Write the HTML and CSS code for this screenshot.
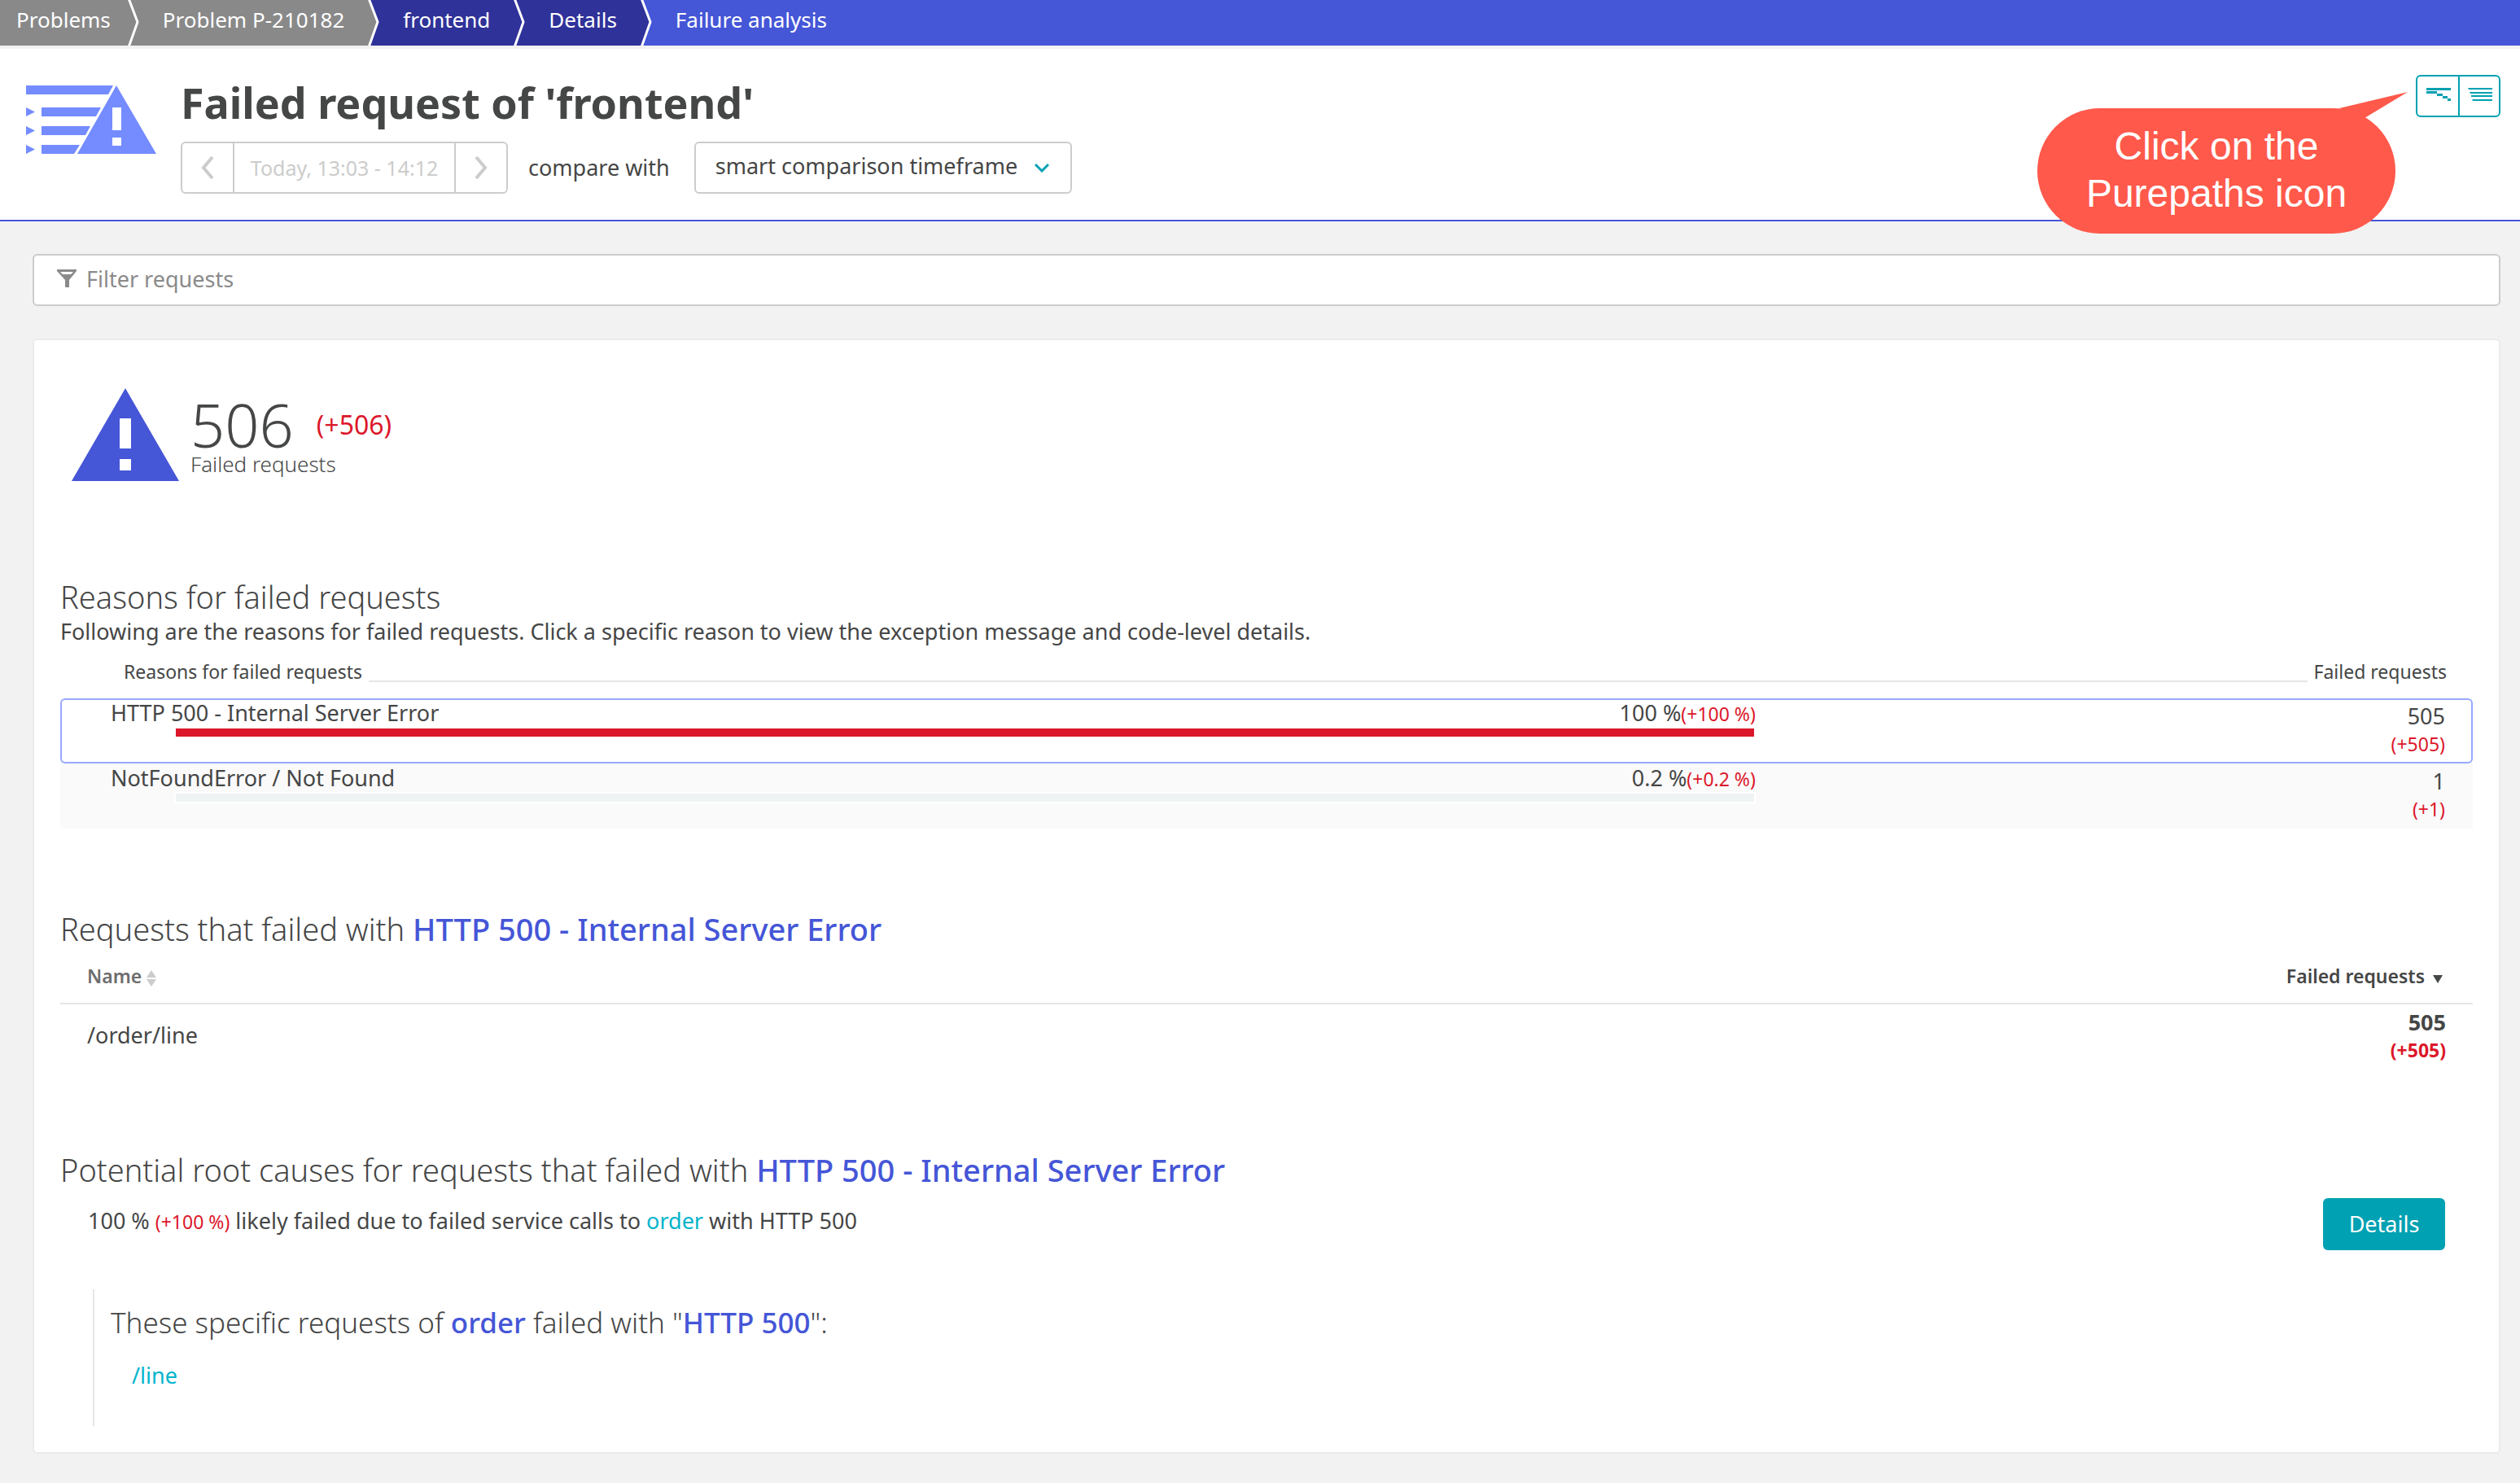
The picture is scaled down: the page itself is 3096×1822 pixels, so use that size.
FILE: index.html
```html
<!DOCTYPE html>
<html lang="en">
<head>
<meta charset="utf-8">
<title>Failure analysis</title>
<link rel="stylesheet" href="styles.css">
</head>
<body>
<nav class="crumbs" aria-label="Breadcrumb">
  <a class="crumb crumb-first crumb-gray" href="#">Problems</a>
  <svg class="sep sep-gray crumb-gray" viewBox="0 0 16 56" aria-hidden="true"><path d="M0 -2H2L13 27L2 58H0Z"/><polyline points="2,-2 13,27 2,58"/></svg>
  <a class="crumb crumb-gray" href="#">Problem P-210182</a>
  <svg class="sep sep-gray crumb-navy" viewBox="0 0 16 56" aria-hidden="true"><path d="M0 -2H2L13 27L2 58H0Z"/><polyline points="2,-2 13,27 2,58"/></svg>
  <a class="crumb crumb-navy" href="#">frontend</a>
  <svg class="sep sep-navy crumb-navy" viewBox="0 0 16 56" aria-hidden="true"><path d="M0 -2H2L13 27L2 58H0Z"/><polyline points="2,-2 13,27 2,58"/></svg>
  <a class="crumb crumb-navy" href="#">Details</a>
  <svg class="sep sep-navy crumb-blue" viewBox="0 0 16 56" aria-hidden="true"><path d="M0 -2H2L13 27L2 58H0Z"/><polyline points="2,-2 13,27 2,58"/></svg>
  <a class="crumb crumb-blue crumb-last" href="#" aria-current="page">Failure analysis</a>
</nav>

<header class="page-head">
  <svg class="head-icon" width="160" height="84" viewBox="0 0 160 84" aria-hidden="true">
    <path d="M0 0H107L101 11H0ZM19 27H92L86 38H19ZM19 50H79L73 61H19ZM19 73H66L59 84H19Z"/>
    <path d="M0 27L11 32.500L0 38ZM0 50L11 55.500L0 61ZM0 73L11 78.500L0 84Z"/>
    <path fill-rule="evenodd" d="M111 0L160 84H63ZM106 27H117V55H106ZM106 64H117V74H106Z"/>
  </svg>
  <div class="head-main">
    <h1>Failed request of 'frontend'</h1>
    <div class="controls">
      <div class="timeframe">
        <button type="button" aria-label="Previous timeframe" disabled><svg width="16" height="28" viewBox="0 0 16 28"><polyline points="14,1 3,14 14,27"/></svg></button>
        <button type="button" class="range" disabled>Today, 13:03 - 14:12</button>
        <button type="button" aria-label="Next timeframe" disabled><svg width="16" height="28" viewBox="0 0 16 28"><polyline points="2,1 13,14 2,27"/></svg></button>
      </div>
      <label for="compare">compare with</label>
      <div class="select">
        <select id="compare"><option>smart comparison timeframe</option></select>
        <svg width="18" height="12" viewBox="0 0 18 12" aria-hidden="true"><polyline points="1,2 9,10 17,2"/></svg>
      </div>
    </div>
  </div>
  <div class="views">
    <button type="button" aria-label="Purepaths"><svg width="30" height="16" viewBox="0 0 30 16"><path d="M0 0H30V3H0ZM0 4H13V7H0ZM13 7H20V10H13ZM20 10H26V13H20ZM26 13H30V16H26Z"/></svg></button>
    <button type="button" aria-label="Response time analysis"><svg width="30" height="16" viewBox="0 0 30 16"><path d="M0 0H30V2H1ZM2 5H30V7H3ZM4 9H30V11H4ZM5 14H30V16H6Z"/></svg></button>
  </div>
  <div class="callout">
    <svg width="84" height="32" viewBox="0 0 84 32" aria-hidden="true"><path d="M0 20L84 0L31 32Z"/></svg>
    Click on the<br>Purepaths icon
  </div>
</header>

<main>
  <div class="filter">
    <svg width="24" height="22" viewBox="0 0 24 22" aria-hidden="true"><path fill-rule="evenodd" d="M0 0H24V2L15 13V22H10V13L0 2ZM4 3L7 6H17L20 3Z"/></svg>
    <input type="text" placeholder="Filter requests" aria-label="Filter requests">
  </div>

  <div class="card">
    <div class="summary">
      <svg width="132" height="114" viewBox="0 0 132 114" aria-hidden="true"><path fill-rule="evenodd" d="M66 0L132 114H0ZM59 37H73V74H59ZM59 87H73V101H59Z"/></svg>
      <div class="summary-text">
        <div class="figure"><span class="count">506</span><span class="count-delta">(+506)</span></div>
        <div class="light">Failed requests</div>
      </div>
    </div>

    <section class="reasons">
      <h2>Reasons for failed requests</h2>
      <p>Following are the reasons for failed requests. Click a specific reason to view the exception message and code-level details.</p>
      <table class="reason-table">
        <thead>
          <tr><th scope="col"><div class="rule-head">Reasons for failed requests</div></th><th scope="col">Failed requests</th></tr>
        </thead>
        <tbody>
          <tr class="selected">
            <td><div class="share"><div class="share-line"><span>HTTP 500 - Internal Server Error</span><span>100 %<span class="delta">(+100 %)</span></span></div><div class="bar"><div class="bar-fill" style="width:100%"></div></div></div></td>
            <td class="num">505<div class="delta">(+505)</div></td>
          </tr>
          <tr>
            <td><div class="share"><div class="share-line"><span>NotFoundError / Not Found</span><span>0.2 %<span class="delta">(+0.2 %)</span></span></div><div class="bar"></div></div></td>
            <td class="num">1<div class="delta">(+1)</div></td>
          </tr>
        </tbody>
      </table>
    </section>

    <section>
      <h2>Requests that failed with <strong>HTTP 500 - Internal Server Error</strong></h2>
      <table class="request-table">
        <thead>
          <tr>
            <th scope="col" class="muted">Name <svg class="sort" width="12" height="20" viewBox="0 0 12 20" aria-hidden="true"><path d="M6 0L12 9H0ZM0 11H12L6 20Z"/></svg></th>
            <th scope="col">Failed requests <svg class="sorted" width="12" height="10" viewBox="0 0 12 10" aria-hidden="true"><path d="M0 0H12L6 10Z"/></svg></th>
          </tr>
        </thead>
        <tbody>
          <tr><td>/order/line</td><td class="num">505<div class="delta">(+505)</div></td></tr>
        </tbody>
      </table>
    </section>

    <section>
      <h2>Potential root causes for requests that failed with <strong>HTTP 500 - Internal Server Error</strong></h2>
      <div class="cause">
        <p>100 % <span class="delta">(+100 %)</span> likely failed due to failed service calls to <a href="#">order</a> with HTTP 500</p>
        <button type="button" class="primary">Details</button>
      </div>
      <div class="specifics">
        <h3>These specific requests of <strong>order</strong> failed with "<strong>HTTP 500</strong>":</h3>
        <a href="#">/line</a>
      </div>
    </section>
  </div>
</main>
</body>
</html>
```
FILE: styles.css
```css
:root {
  --text: #454646;
  --blue: #4556d7;
  --navy: #2f3299;
  --gray: #898989;
  --teal: #00a1b2;
  --link: #00b4cc;
  --red: #dc172a;
  --line: #e6e6e6;
  --edge: #cccccc;
}

* { box-sizing: border-box; }

body {
  margin: 0;
  background: #f2f2f2;
  color: var(--text);
  font: 400 27px/32px "Noto Sans", sans-serif;
}

button, select, input { font: inherit; color: inherit; }
h1, h2, h3, p { margin: 0; }
a { color: var(--link); text-decoration: none; }
svg { display: block; flex: none; }

/* Breadcrumb */
.crumbs {
  display: flex;
  height: 56px;
  margin-bottom: 4px;
  background: var(--blue);
  font-size: 26px;
}
.crumb {
  padding: 8px 28px 0;
  color: #fff;
  white-space: nowrap;
}
.crumb-first { padding: 8px 20px 0; }
.crumb-last { flex: 1; }
.crumb-gray { background: var(--gray); }
.crumb-navy { background: var(--navy); }
.crumb-blue { background: var(--blue); }
.sep { width: 16px; height: 56px; }
.sep polyline { fill: none; stroke: #fff; stroke-width: 3; }
.sep-gray path { fill: var(--gray); }
.sep-navy path { fill: var(--navy); }

/* Page header */
.page-head {
  position: relative;
  display: flex;
  align-items: flex-start;
  padding: 32px 24px 32px 32px;
  border-bottom: 2px solid var(--blue);
  background: #fff;
}
.head-icon { margin-top: 13px; fill: #748cff; }
.head-main { flex: 1; padding: 4px 0 0 30px; }
h1 { font-size: 52px; line-height: 60px; font-weight: 700; }

.controls {
  display: flex;
  align-items: center;
  margin-top: 18px;
}
.timeframe {
  display: flex;
  height: 64px;
  border: 2px solid var(--edge);
  border-radius: 6px;
}
.timeframe button {
  display: grid;
  place-items: center;
  width: 62px;
  padding: 0;
  border: 0;
  background: none;
  color: var(--edge);
}
.timeframe .range {
  width: 274px;
  border: solid var(--edge);
  border-width: 0 2px;
  font-size: 25px;
}
.timeframe polyline { fill: none; stroke: var(--edge); stroke-width: 4; }
.controls label { margin: 0 30px 0 25px; }
.select { display: grid; align-items: center; }
.select select, .select svg { grid-area: 1 / 1; }
.select select {
  width: 464px;
  height: 64px;
  padding: 0 24px 4px;
  border: 2px solid var(--edge);
  border-radius: 6px;
  background: #fff;
  appearance: none;
}
.select svg {
  justify-self: end;
  margin-right: 28px;
  fill: none;
  stroke: var(--teal);
  stroke-width: 3;
  pointer-events: none;
}

.views {
  display: flex;
  border: 2px solid var(--teal);
  border-radius: 6px;
}
.views button {
  display: grid;
  place-items: center;
  width: 50px;
  height: 48px;
  padding: 0 0 4px 2px;
  border: 0;
  background: none;
}
.views button + button { border-left: 2px solid var(--teal); }
.views svg { fill: var(--teal); }

.callout {
  position: absolute;
  top: 73px;
  right: 153px;
  width: 440px;
  padding: 18px 0 20px;
  border-radius: 77px;
  background: #ff594b;
  color: #fff;
  font: 48px/58px "Liberation Sans", Arial, sans-serif;
  text-align: center;
}
.callout svg {
  position: absolute;
  top: -20px;
  right: -15px;
  fill: #ff594b;
}

/* Body */
main { padding: 40px 24px 36px 40px; }

.filter {
  display: flex;
  align-items: center;
  gap: 12px;
  height: 64px;
  padding: 0 28px;
  border: 2px solid var(--edge);
  border-radius: 6px;
  background: #fff;
  fill: #8a8a8a;
}
.filter svg { margin-bottom: 4px; }
.filter input {
  flex: 1;
  height: 56px;
  padding: 0 0 4px;
  border: 0;
  outline: 0;
  background: none;
}
.filter input::placeholder { color: #8a8a8a; opacity: 1; }

.card {
  margin-top: 40px;
  padding: 0 32px 32px;
  border: 2px solid #ebebeb;
  border-radius: 6px;
  background: #fff;
}

.summary {
  display: flex;
  gap: 14px;
  padding: 59px 14px 19px;
}
.summary svg { fill: var(--blue); }
.summary-text { padding-top: 13px; }
.figure { display: flex; align-items: center; gap: 28px; }
.count { font-size: 74px; line-height: 64px; font-weight: 300; }
.count-delta { font-size: 32px; line-height: 40px; color: var(--red); }
.light { font-size: 26px; font-weight: 300; }

section { margin-top: 98px; }
h2 { font-size: 38px; line-height: 50px; font-weight: 300; }
h3 { font-size: 35px; line-height: 50px; font-weight: 300; }
strong { font-weight: 500; color: var(--blue); }
.delta { font-size: 23px; color: var(--red); }

table { width: 100%; border-spacing: 0; }
th {
  padding: 0;
  font-size: 23px;
  text-align: left;
  white-space: nowrap;
}
td { padding: 0; }
th:last-child, .num { text-align: right; }
.num .delta { line-height: 36px; }

/* Reasons */
.reasons p { margin-top: 2px; }
.reason-table { margin-top: 17px; }
.reason-table th { padding-bottom: 17px; font-weight: 400; }
.reason-table th:first-child { padding-left: 78px; }
.reason-table th:last-child { width: 1px; padding-right: 32px; }
.rule-head { display: flex; gap: 8px; margin-right: 8px; }
.rule-head::after {
  content: "";
  flex: 1;
  height: 27px;
  border-bottom: 2px solid var(--line);
}
.reason-table td {
  height: 80px;
  border: solid #fafafa;
  border-width: 2px 0;
  background: #fafafa;
  vertical-align: top;
}
.reason-table td:first-child { padding-left: 60px; border-left-width: 2px; }
.reason-table td:last-child { padding: 4px 32px 0 0; border-right-width: 2px; }
.reason-table .selected td { border-color: #97a9ff; background: #fff; }
.selected td:first-child { border-radius: 6px 0 0 6px; }
.selected td:last-child { border-radius: 0 6px 6px 0; }
.share { width: calc(75% - 9px); }
.share-line { display: flex; justify-content: space-between; }
.bar {
  height: 14px;
  margin-left: 78px;
  border: 2px solid #fff;
  background: #eff3f4;
}
.bar-fill { height: 10px; background: var(--red); }

/* Failed requests */
.request-table th {
  padding: 17px 33px;
  border-bottom: 2px solid var(--line);
  font-weight: 600;
}
.request-table .muted { color: #6d6d6d; }
.request-table td { padding: 6px 33px 10px; }
.request-table .num { padding-bottom: 6px; font-weight: 700; }
.request-table svg { display: inline-block; }
.sort { fill: var(--edge); vertical-align: -4px; }
.sorted { margin: 0 4px; fill: var(--text); }

/* Root causes */
.cause {
  display: flex;
  justify-content: space-between;
  padding: 10px 34px 0;
}
.cause p { padding-top: 12px; }
.primary {
  width: 150px;
  height: 64px;
  padding: 0;
  border: 0;
  border-radius: 6px;
  background: var(--teal);
  color: #fff;
}
.specifics {
  margin: 48px 0 0 40px;
  padding: 16px 20px 46px;
  border-left: 2px solid var(--line);
}
.specifics a { display: block; margin: 24px 26px 0; }
```
